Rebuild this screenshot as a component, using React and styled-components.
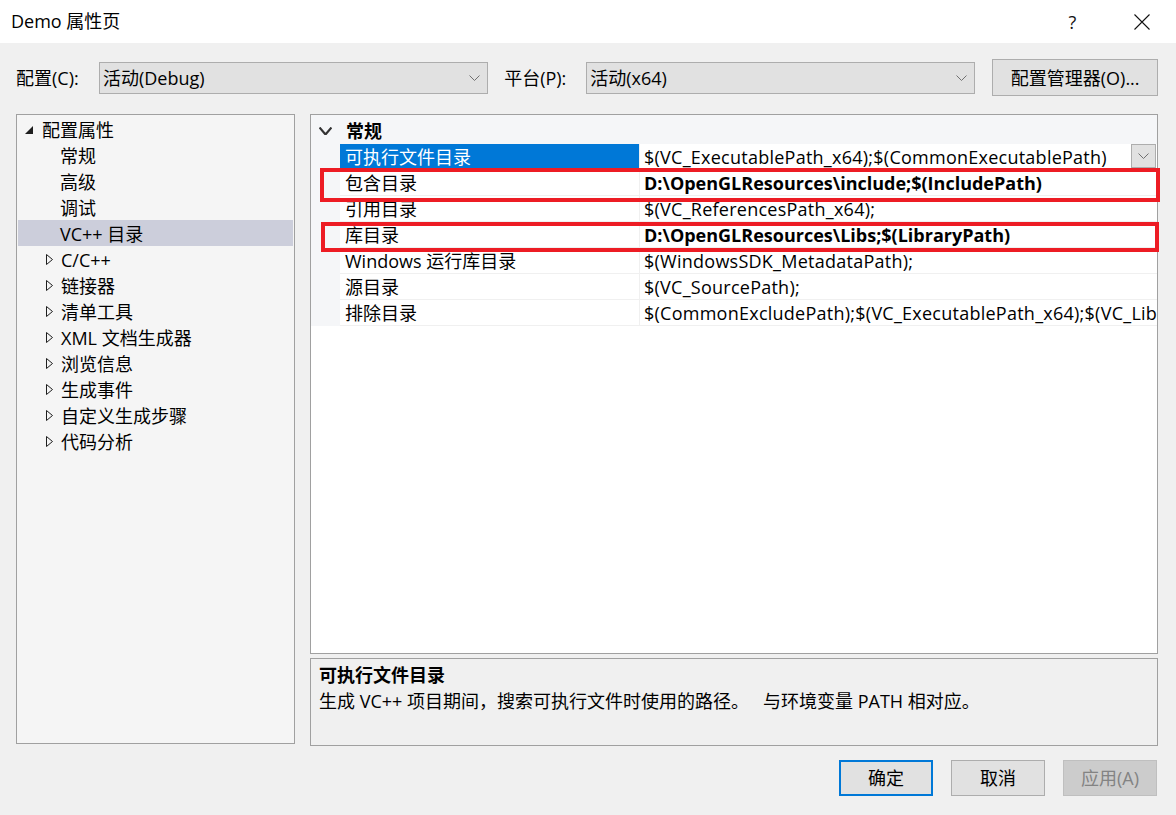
import styled, { createGlobalStyle } from 'styled-components';

const GlobalStyle = createGlobalStyle`
  html, body {
    margin: 0;
    padding: 0;
    background: #f0f0f0;
  }
  * {
    box-sizing: border-box;
  }
  body {
    font-family: 'Open Sans', 'Noto Sans CJK SC', sans-serif;
    font-size: 18px;
    color: #000;
  }
`;

const Window = styled.div`
  width: 1176px;
  height: 815px;
  display: flex;
  flex-direction: column;
  background: #f0f0f0;
  overflow: hidden;
`;

const TitleBar = styled.div`
  height: 43px;
  background: #fff;
  display: flex;
  align-items: center;
  padding-left: 11px;
  flex-shrink: 0;
`;

const Title = styled.div`
  flex: 1;
  font-size: 18px;
  line-height: 1;
  padding-bottom: 2px;
`;

const TitleButton = styled.div`
  width: 69px;
  height: 43px;
  display: flex;
  align-items: center;
  justify-content: center;
  font-size: 18px;
  color: #111;
`;

const Content = styled.div`
  flex: 1;
  display: flex;
  flex-direction: column;
  padding: 16px 18px 0 16px;
`;

const TopRow = styled.div`
  display: flex;
  align-items: center;
  height: 37px;
`;

const Label = styled.div`
  width: ${p => p.w}px;
  flex-shrink: 0;
  line-height: 1;
`;

const Combo = styled.div`
  width: 390px;
  height: 32px;
  background: #e1e1e1;
  border: 1px solid #adadad;
  display: flex;
  align-items: center;
  padding-left: 3px;
  margin-right: ${p => p.mr || 0}px;
`;

const ComboText = styled.div`
  flex: 1;
  line-height: 1;
`;

const ComboArrow = styled.div`
  width: 26px;
  display: flex;
  align-items: center;
  justify-content: center;
`;

const Button = styled.div`
  width: ${p => p.w || 94}px;
  height: ${p => p.h || 36}px;
  display: flex;
  align-items: center;
  justify-content: center;
  background: ${p => (p.disabled ? '#cccccc' : '#e1e1e1')};
  border: ${p => (p.primary ? '2px solid #0078d7' : p.disabled ? '1px solid #bfbfbf' : '1px solid #adadad')};
  color: ${p => (p.disabled ? '#838383' : '#000')};
  line-height: 1;
`;

const Main = styled.div`
  display: flex;
  margin-top: 18px;
  gap: 15px;
`;

const Tree = styled.div`
  width: 279px;
  height: 630px;
  background: #f5f5f5;
  border: 1px solid #a0a0a0;
  padding: 1px;
`;

const TreeRow = styled.div`
  height: 26px;
  display: flex;
  align-items: center;
  padding-left: ${p => p.indent}px;
  padding-top: 1px;
  background: ${p => (p.selected ? '#cccedb' : 'transparent')};
  line-height: 1;
  white-space: nowrap;
`;

const Expander = styled.div`
  width: ${p => p.w}px;
  display: flex;
  align-items: center;
  flex-shrink: 0;
`;

const RightCol = styled.div`
  width: 848px;
  display: flex;
  flex-direction: column;
  gap: 4px;
`;

const Grid = styled.div`
  position: relative;
  height: 540px;
  background: #fff;
  border: 1px solid #a0a0a0;
`;

const CategoryRow = styled.div`
  height: 29px;
  display: flex;
  align-items: center;
  background: #f5f6f8;
  padding-left: 8px;
  padding-top: 2px;
  font-weight: 700;
  line-height: 1;
`;

const CategoryChevron = styled.div`
  width: 27px;
  display: flex;
  align-items: center;
`;

const PropRow = styled.div`
  height: 26px;
  display: flex;
  font-weight: ${p => (p.bold ? 700 : 400)};
  letter-spacing: ${p => (p.bold ? 0 : 0.25)}px;
`;

const Margin = styled.div`
  width: 29px;
  background: #f5f6f8;
  flex-shrink: 0;
`;

const NameCell = styled.div`
  width: 300px;
  flex-shrink: 0;
  display: flex;
  align-items: center;
  padding-left: 5px;
  font-weight: 400;
  letter-spacing: 0;
  background: ${p => (p.selected ? '#0078d7' : '#fff')};
  color: ${p => (p.selected ? '#fff' : '#000')};
  border-right: 1px solid #f0f0f0;
  border-bottom: 1px solid ${p => (p.selected ? '#0078d7' : '#f0f0f0')};
  line-height: 1;
`;

const ValueCell = styled.div`
  position: relative;
  flex: 1;
  display: flex;
  align-items: center;
  padding-left: 4px;
  border-bottom: 1px solid #f0f0f0;
  white-space: nowrap;
  overflow: hidden;
  line-height: 1;
`;

const DropButton = styled.div`
  position: absolute;
  right: 1px;
  top: 0;
  width: 25px;
  height: 24px;
  background: #e1e1e1;
  border: 1px solid #adadad;
  display: flex;
  align-items: center;
  justify-content: center;
`;

const RedBox = styled.div`
  position: absolute;
  left: ${p => p.x}px;
  top: ${p => p.y}px;
  width: ${p => p.w}px;
  height: ${p => p.h}px;
  border: 4px solid #ed1c24;
  pointer-events: none;
`;

const Description = styled.div`
  height: 88px;
  border: 1px solid #a0a0a0;
  padding: 3px 8px;
  line-height: 26px;
`;

const DescTitle = styled.div`
  font-weight: 700;
`;

const DescText = styled.div`
  white-space: pre;
`;

const Footer = styled.div`
  display: flex;
  justify-content: flex-end;
  gap: 18px;
  margin-top: 14px;
  padding-right: 1px;
`;

const Chevron = ({ w = 11, h = 6, color = '#707070', sw = 1 }) => (
  <svg width={w} height={h} viewBox={`0 0 ${w} ${h}`}>
    <path d={`M0.5 0.5 L${w / 2} ${h - 0.5} L${w - 0.5} 0.5`} fill="none" stroke={color} strokeWidth={sw} />
  </svg>
);

const OpenTriangle = () => (
  <svg width="8" height="8" viewBox="0 0 8 8">
    <path d="M8 0 L8 8 L0 8 Z" fill="#1e1e1e" />
  </svg>
);

const ClosedTriangle = () => (
  <svg width="7" height="11" viewBox="0 0 7 11">
    <path d="M0.5 0.5 L6.5 5.5 L0.5 10.5 Z" fill="none" stroke="#1e1e1e" strokeWidth="1" />
  </svg>
);

const treeChildren = ['常规', '高级', '调试', 'VC++ 目录'];
const treeGroups = ['C/C++', '链接器', '清单工具', 'XML 文档生成器', '浏览信息', '生成事件', '自定义生成步骤', '代码分析'];

const props = [
  { name: '可执行文件目录', value: '$(VC_ExecutablePath_x64);$(CommonExecutablePath)', selected: true },
  { name: '包含目录', value: 'D:\\OpenGLResources\\include;$(IncludePath)', bold: true },
  { name: '引用目录', value: '$(VC_ReferencesPath_x64);' },
  { name: '库目录', value: 'D:\\OpenGLResources\\Libs;$(LibraryPath)', bold: true },
  { name: 'Windows 运行库目录', value: '$(WindowsSDK_MetadataPath);' },
  { name: '源目录', value: '$(VC_SourcePath);' },
  { name: '排除目录', value: '$(CommonExcludePath);$(VC_ExecutablePath_x64);$(VC_LibraryPath_x64)' },
];

export default function App() {
  return (
    <>
      <GlobalStyle />
      <Window>
        <TitleBar>
          <Title>Demo 属性页</Title>
          <TitleButton>?</TitleButton>
          <TitleButton>
            <svg width="16" height="16" viewBox="0 0 16 16">
              <path d="M0.5 0.5 L15.5 15.5 M15.5 0.5 L0.5 15.5" stroke="#111" strokeWidth="1.1" fill="none" />
            </svg>
          </TitleButton>
        </TitleBar>
        <Content>
          <TopRow>
            <Label w={83}>配置(C):</Label>
            <Combo mr={16}>
              <ComboText>活动(Debug)</ComboText>
              <ComboArrow><Chevron /></ComboArrow>
            </Combo>
            <Label w={82}>平台(P):</Label>
            <Combo mr={17}>
              <ComboText>活动(x64)</ComboText>
              <ComboArrow><Chevron /></ComboArrow>
            </Combo>
            <Button w={166} h={37}>配置管理器(O)...</Button>
          </TopRow>

          <Main>
            <Tree>
              <TreeRow indent={7}>
                <Expander w={17}><OpenTriangle /></Expander>
                配置属性
              </TreeRow>
              {treeChildren.map(t => (
                <TreeRow key={t} indent={42} selected={t === 'VC++ 目录'}>{t}</TreeRow>
              ))}
              {treeGroups.map(t => (
                <TreeRow key={t} indent={28}>
                  <Expander w={15}><ClosedTriangle /></Expander>
                  {t}
                </TreeRow>
              ))}
            </Tree>

            <RightCol>
              <Grid>
                <CategoryRow>
                  <CategoryChevron><Chevron w={13} h={8} color="#333" sw={2.2} /></CategoryChevron>
                  常规
                </CategoryRow>
                {props.map(p => (
                  <PropRow key={p.name} bold={p.bold}>
                    <Margin />
                    <NameCell selected={p.selected}>{p.name}</NameCell>
                    <ValueCell>
                      {p.value}
                      {p.selected && (
                        <DropButton><Chevron /></DropButton>
                      )}
                    </ValueCell>
                  </PropRow>
                ))}
                <RedBox x={9} y={53} w={840} h={34} />
                <RedBox x={10} y={107} w={838} h={30} />
              </Grid>
              <Description>
                <DescTitle>可执行文件目录</DescTitle>
                <DescText>{'生成 VC++ 项目期间，搜索可执行文件时使用的路径。   与环境变量 PATH 相对应。'}</DescText>
              </Description>
            </RightCol>
          </Main>

          <Footer>
            <Button primary>确定</Button>
            <Button>取消</Button>
            <Button disabled>应用(A)</Button>
          </Footer>
        </Content>
      </Window>
    </>
  );
}
